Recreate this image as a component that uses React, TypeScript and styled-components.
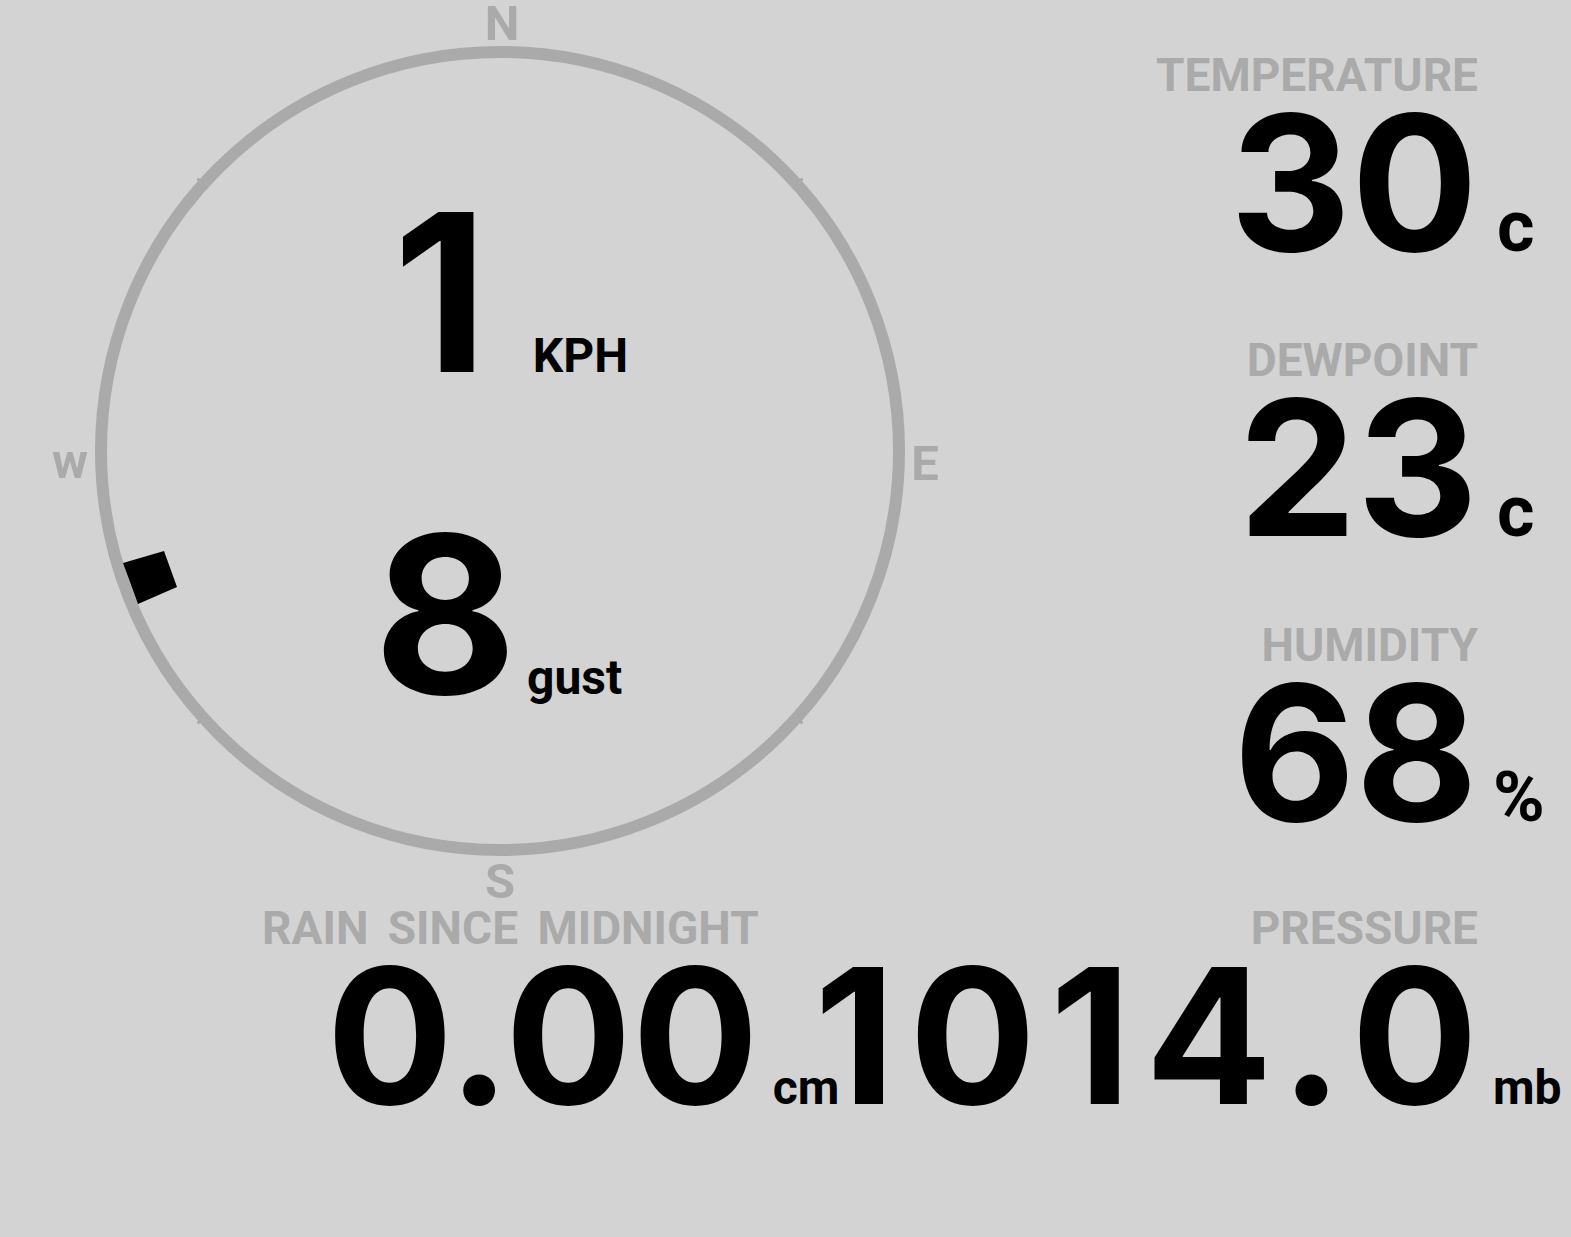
import styled, { createGlobalStyle } from "styled-components";

const GlobalStyle = createGlobalStyle`
    html, body {
        margin: 0;
        padding: 0;
        background: #d3d3d3;
    }

    body {
        font-family: Roboto, "Liberation Sans", sans-serif;
        color: #000;
    }
`;

const Page = styled.div`
    min-height: 100vh;
    display: flex;
    flex-direction: column;
`;

const TopRow = styled.div`
    display: flex;
    justify-content: space-between;
    align-items: flex-start;
    padding-right: 12px;
`;

const Compass = styled.div`
    position: relative;
    width: 1000px;
    height: 905px;
    flex-shrink: 0;
`;

const Dial = styled.svg`
    position: absolute;
    inset: 0;
`;

const DialMark = styled.text`
    font-family: Roboto, "Liberation Sans", sans-serif;
    font-weight: 700;
    font-size: 49px;
    fill: #aaa;
`;

const Readouts = styled.div`
    position: relative;
    display: flex;
    flex-direction: column;
    align-items: center;
    gap: 102px;
    padding-top: 182px;
`;

const Reading = styled.div<{ $gap: number; $shift: number }>`
    display: flex;
    align-items: baseline;
    gap: ${(p) => p.$gap}px;
    margin-left: ${(p) => p.$shift}px;
`;

const Speed = styled.span`
    font-family: Inter, Roboto, sans-serif;
    font-weight: 700;
    font-size: 220px;
    line-height: 220px;
`;

const SpeedUnit = styled.span`
    font-weight: 700;
    font-size: 48px;
    line-height: 48px;
`;

const StatColumn = styled.div`
    display: flex;
    flex-direction: column;
    align-items: flex-end;
    gap: 70px;
    padding-top: 52px;
`;

const BottomRow = styled.div`
    display: flex;
    justify-content: flex-end;
    align-items: flex-start;
    padding-right: 12px;
`;

const Stat = styled.div<{ $unitWidth: string; $gap: number; $overlap: number }>`
    display: grid;
    grid-template-columns: auto ${(p) => p.$unitWidth};
    column-gap: ${(p) => p.$gap}px;
    align-items: baseline;
    margin-right: ${(p) => -p.$overlap}px;
`;

const Label = styled.div`
    grid-column: 1;
    justify-self: end;
    font-weight: 700;
    font-size: 46px;
    line-height: 46px;
    word-spacing: 8px;
    color: #aaa;
    white-space: nowrap;
`;

const Value = styled.div<{ $spacing: number }>`
    grid-column: 1;
    justify-self: end;
    margin-right: ${(p) => -p.$spacing}px;
    font-family: Inter, Roboto, sans-serif;
    font-weight: 700;
    font-size: 188px;
    line-height: 169px;
    letter-spacing: ${(p) => p.$spacing}px;
    white-space: nowrap;
`;

const Unit = styled.div<{ $size: number; $nudge: number }>`
    grid-column: 2;
    margin-left: ${(p) => p.$nudge}px;
    font-weight: 700;
    font-size: ${(p) => p.$size}px;
    line-height: 1;
    white-space: nowrap;
`;

const CX = 500;
const CY = 451;
const R = 399;

// small seams in the ring, a little off the diagonals
const seams = [42, 138, 222, 318];

interface StatsProps {
    label: string;
    value: string;
    unit: string;
    unitSize: number;
    unitWidth?: string;
    gap?: number;
    nudge?: number;
    spacing?: number;
    overlap?: number;
}

function Stats({
    label,
    value,
    unit,
    unitSize,
    unitWidth = "66px",
    gap = 15,
    nudge = 0,
    spacing = 0,
    overlap = 0,
}: StatsProps) {
    return (
        <Stat $unitWidth={unitWidth} $gap={gap} $overlap={overlap}>
            <Label>{label}</Label>
            <Value $spacing={spacing}>{value}</Value>
            <Unit $size={unitSize} $nudge={nudge}>
                {unit}
            </Unit>
        </Stat>
    );
}

function WindDial() {
    return (
        <Compass>
            <Dial width="1000" height="905" viewBox="0 0 1000 905">
                <circle cx={CX} cy={CY} r={R} fill="none" stroke="#aaa" strokeWidth="12" />
                {seams.map((deg) => {
                    const a = (deg * Math.PI) / 180;
                    return (
                        <line
                            key={deg}
                            x1={CX + Math.cos(a) * (R - 2)}
                            y1={CY - Math.sin(a) * (R - 2)}
                            x2={CX + Math.cos(a) * (R + 8)}
                            y2={CY - Math.sin(a) * (R + 8)}
                            stroke="#aaa"
                            strokeWidth="3"
                        />
                    );
                })}
                <polygon points="123,563 164,551 177,587 138,604" fill="#000" />
                <DialMark x="502" y="40" textAnchor="middle">N</DialMark>
                <DialMark x="925" y="480" textAnchor="middle">E</DialMark>
                <DialMark x="500" y="898" textAnchor="middle">S</DialMark>
                <DialMark x="70" y="478" textAnchor="middle">w</DialMark>
            </Dial>
            <Readouts>
                <Reading $gap={45} $shift={21}>
                    <Speed>1</Speed>
                    <SpeedUnit>KPH</SpeedUnit>
                </Reading>
                <Reading $gap={10} $shift={-4}>
                    <Speed>8</Speed>
                    <SpeedUnit>gust</SpeedUnit>
                </Reading>
            </Readouts>
        </Compass>
    );
}

export default function App() {
    return (
        <>
            <GlobalStyle />
            <Page>
                <TopRow>
                    <WindDial />
                    <StatColumn>
                        <Stats label="TEMPERATURE" value="30" unit="c" unitSize={72} nudge={4} />
                        <Stats label="DEWPOINT" value="23" unit="c" unitSize={72} nudge={4} />
                        <Stats label="HUMIDITY" value="68" unit="%" unitSize={70} />
                    </StatColumn>
                </TopRow>
                <BottomRow>
                    <Stats
                        label="RAIN SINCE MIDNIGHT"
                        value="0.00"
                        unit="cm"
                        unitSize={48}
                        unitWidth="auto"
                        gap={14}
                        overlap={25}
                    />
                    <Stats label="PRESSURE" value="1014.0" unit="mb" unitSize={48} spacing={14} />
                </BottomRow>
            </Page>
        </>
    );
}
